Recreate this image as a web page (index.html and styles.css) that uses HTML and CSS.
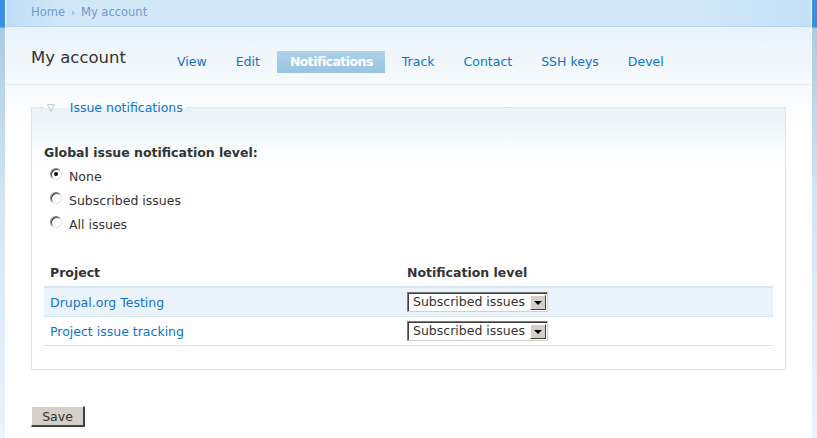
FILE: index.html
```html
<!DOCTYPE html>
<html>
<head>
<meta charset="utf-8">
<link rel="stylesheet" href="styles.css">
</head>
<body>
<div class="frame">
  <div class="side side-left"></div>
  <div class="main">
    <div class="topbar"><a class="crumb" href="#">Home</a><span class="sep">›</span><a class="crumb" href="#">My account</a></div>
    <div class="header">
      <h1 class="title">My account</h1>
      <ul class="tabs">
        <li><a href="#">View</a></li>
        <li><a href="#">Edit</a></li>
        <li class="active"><a href="#">Notifications</a></li>
        <li><a href="#">Track</a></li>
        <li><a href="#">Contact</a></li>
        <li><a href="#">SSH keys</a></li>
        <li><a href="#">Devel</a></li>
      </ul>
    </div>
    <div class="content">
      <fieldset class="box">
        <legend class="legend"><span class="tri">▽</span><a href="#">Issue notifications</a></legend>
        <div class="label">Global issue notification level:</div>
        <div class="radios">
          <label class="radio"><input type="radio" name="lvl" checked> None</label>
          <label class="radio"><input type="radio" name="lvl"> Subscribed issues</label>
          <label class="radio"><input type="radio" name="lvl"> All issues</label>
        </div>
        <table class="tbl">
          <thead>
            <tr><th class="c1">Project</th><th>Notification level</th></tr>
          </thead>
          <tbody>
            <tr class="odd"><td class="c1"><a href="#">Drupal.org Testing</a></td><td><span class="sel"><span class="selText">Subscribed issues</span><span class="selBtn"><span class="arrow"></span></span></span></td></tr>
            <tr><td class="c1"><a href="#">Project issue tracking</a></td><td><span class="sel"><span class="selText">Subscribed issues</span><span class="selBtn"><span class="arrow"></span></span></span></td></tr>
          </tbody>
        </table>
      </fieldset>
      <button class="save">Save</button>
    </div>
  </div>
  <div class="side side-right"></div>
</div>
</body>
</html>
```
FILE: styles.css
```css
* { box-sizing: border-box; }
html, body { margin: 0; padding: 0; }
body {
  font-family: "DejaVu Sans", Verdana, sans-serif;
  font-size: 12px;
  color: #3a3a3a;
  background: #fff;
}
a { color: #0f73c9; text-decoration: none; }
.frame { display: flex; width: 817px; height: 438px; overflow: hidden; }
.side { width: 5px; flex: none; background: linear-gradient(180deg, #3b8fe0 0, #3b8fe0 27px, #a9cbe3 28px, #d4e6f3 200px, #eaf3fb 438px); }
.side-left { border-right: 1px solid #fff; width: 6px; }
.side-right { border-left: 1px solid #fff; width: 6px; }
.main { flex: 1; display: flex; flex-direction: column; }
.topbar {
  height: 27px;
  padding: 5px 0 0 25px;
  background: linear-gradient(90deg, #bfdff6 0, #d2e8f7 60px, #d3e8f7 85%, #c2e0f6 100%);
  border-bottom: 1px solid #b6d6ef;
  font-size: 11.5px;
  color: #6e9ad6;
}
.crumb { color: #6b98d8; }
.sep { color: #6b98d8; font-size: 10px; margin: 0 6px 0 6px; }
.header {
  height: 58px;
  background: linear-gradient(180deg, #e9f2fa 0, #f6fafd 100%);
  border-bottom: 1px solid #e0e8f0;
  display: flex;
  align-items: flex-start;
  padding: 20px 0 0 25px;
}
.title { margin: 0; font-family: "DejaVu Sans", sans-serif; font-weight: normal; font-size: 16.5px; color: #333; line-height: 22px; width: 134px; flex: none; white-space: nowrap; }
.tabs { list-style: none; margin: 0; padding: 4px 0 0 0; display: flex; gap: 0; }
.tabs li { font-size: 12.5px; line-height: 20px; }
.tabs li a { display: block; padding: 1px 12px; margin-right: 5px; color: #0f73c9; }
.tabs li.active a {
  background: linear-gradient(180deg, #aed2ea 0, #99c3e0 100%);
  color: #fff;
  font-weight: bold;
  padding: 1px 12px 1px 13px;
  letter-spacing: -0.55px;
}
.content {
  flex: 1;
  background: linear-gradient(180deg, #f6f9fc 0, #fff 40px);
  padding: 15px 25px 0 25px;
}
.box {
  margin: 0;
  width: 755px;
  height: 270px;
  border: 1px solid #d8e4ef;
  padding: 0 12px;
  background: linear-gradient(180deg, #eaf2f9 0, #fbfdfe 45px, #fff 60px);
}
.legend { padding: 0 3px 0 3px; font-size: 12.5px; margin-left: 0; }
.legend .tri { color: #9aa3ad; font-size: 10px; margin-right: 15px; position: relative; top: -1px; }
.label { font-weight: bold; margin-top: 30px; font-size: 12.5px; color: #333; }
.radios { margin-top: 4px; }
.radio { display: flex; align-items: center; height: 24px; font-size: 12.5px; color: #333; }
.radio input {
  appearance: none; -webkit-appearance: none;
  margin: 0 7px 0 6px; width: 12px; height: 12px; border-radius: 50%;
  position: relative; top: -2px;
  border: 1px solid #808080; border-right-color: #e0e0e0; border-bottom-color: #e0e0e0;
  box-shadow: inset 1px 1px 0 #404040;
  background: #fff;
}
.radio input:checked::after {
  content: ""; position: absolute; left: 3px; top: 3px; width: 4px; height: 4px; border-radius: 50%; background: #000;
}
.tbl { width: 729px; border-collapse: collapse; margin-top: 23px; font-size: 12.5px; }
.tbl th { text-align: left; font-weight: bold; color: #333; height: 28px; padding: 0; border-bottom: 2px solid #d4e6f4; }
.tbl th.c1, .tbl td.c1 { width: 363px; padding-left: 6px; }
.tbl td { height: 29px; padding: 1px 0 0 0; border-bottom: 1px solid #d4e6f4; }
.tbl tr.odd td { background: #ebf3fa; }
.sel {
  display: inline-flex;
  align-items: stretch;
  width: 141px;
  height: 20px;
  border: 1px solid #7a7a7a;
  border-right-color: #d4d0c8;
  border-bottom-color: #d4d0c8;
  background: #fff;
  vertical-align: middle;
  box-shadow: inset 1px 1px 0 #404040;
}
.selText { flex: 1; padding: 1px 0 0 5px; font-size: 12.5px; color: #333; line-height: 16px; }
.selBtn {
  width: 16px; margin: 2px 1px 1px 0;
  background: #d4d0c8;
  border: 1px solid #fff; border-right-color: #404040; border-bottom-color: #404040;
  display: flex; align-items: center; justify-content: center;
}
.arrow { width: 0; height: 0; border-left: 4px solid transparent; border-right: 4px solid transparent; border-top: 4px solid #000; }
.save {
  margin-top: 36px;
  width: 54px; height: 21px;
  font-family: "DejaVu Sans", sans-serif; font-size: 12.5px; color: #333;
  background: #d4d0c8;
  border: 1px solid #fff; border-right: 2px solid #404040; border-bottom: 2px solid #404040;
  padding: 0;
}
```
